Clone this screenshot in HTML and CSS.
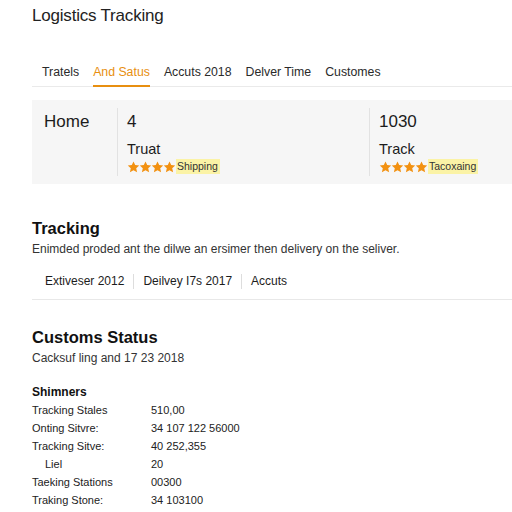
FILE: index.html
```html
<!DOCTYPE html>
<html>
<head>
<meta charset="utf-8">
<link rel="stylesheet" href="styles.css">
</head>
<body>
<div class="page">
  <h1 class="title">Logistics Tracking</h1>
  <nav class="tabs">
    <span class="tab">Tratels</span>
    <span class="tab active">And Satus</span>
    <span class="tab">Accuts 2018</span>
    <span class="tab">Delver Time</span>
    <span class="tab">Customes</span>
  </nav>
  <section class="card">
    <div class="card-label">Home</div>
    <div class="card-col">
      <div class="big">4</div>
      <div class="name">Truat</div>
      <div class="rating"><span class="stars"><svg viewBox="0 0 48 12" width="49" height="12"><g fill="#f29111"><path id="s" d="M6 .4l1.7 3.7 4 .4-3 2.7.9 4L6 9.2 2.4 11.2l.9-4-3-2.7 4-.4z"/><use href="#s" x="12"/><use href="#s" x="24"/><use href="#s" x="36"/></g></svg></span><span class="hl">Shipping</span></div>
    </div>
    <div class="card-col right">
      <div class="big">1030</div>
      <div class="name">Track</div>
      <div class="rating"><span class="stars"><svg viewBox="0 0 48 12" width="49" height="12"><g fill="#f29111"><path id="s2" d="M6 .4l1.7 3.7 4 .4-3 2.7.9 4L6 9.2 2.4 11.2l.9-4-3-2.7 4-.4z"/><use href="#s2" x="12"/><use href="#s2" x="24"/><use href="#s2" x="36"/></g></svg></span><span class="hl">Tacoxaing</span></div>
    </div>
  </section>

  <h2 class="heading track-head">Tracking</h2>
  <p class="desc">Enimded proded ant the dilwe an ersimer then delivery on the seliver.</p>
  <div class="subtabs">
    <span class="sub">Extiveser 2012</span>
    <span class="sub">Deilvey I7s 2017</span>
    <span class="sub">Accuts</span>
  </div>

  <h2 class="heading customs-head">Customs Status</h2>
  <p class="desc">Cacksuf ling and 17 23 2018</p>

  <h3 class="small-head">Shimners</h3>
  <div class="table">
    <div class="row"><span class="k">Tracking Stales</span><span class="v">510,00</span></div>
    <div class="row"><span class="k">Onting Sitvre:</span><span class="v">34 107 122 56000</span></div>
    <div class="row"><span class="k">Tracking Sitve:</span><span class="v">40 252,355</span></div>
    <div class="row"><span class="k indent">Liel</span><span class="v">20</span></div>
    <div class="row"><span class="k">Taeking Stations</span><span class="v">00300</span></div>
    <div class="row"><span class="k">Traking Stone:</span><span class="v">34 103100</span></div>
  </div>
</div>
</body>
</html>
```
FILE: styles.css
```css
html, body {
  margin: 0;
  padding: 0;
  background: #ffffff;
}
body {
  font-family: "Liberation Sans", Arial, sans-serif;
  color: #1c1c1c;
}
.page {
  padding: 6px 0 0 32px;
}
.title {
  margin: 0;
  font-size: 17px;
  font-weight: 400;
  line-height: 20px;
  color: #222;
  letter-spacing: -0.2px;
}
.tabs {
  margin-top: 35px;
  display: flex;
  gap: 14px;
  padding-left: 10px;
  border-bottom: 1px solid #eaeaea;
}
.tab {
  font-size: 12.3px;
  line-height: 15px;
  padding: 4px 0 5px;
  color: #2a2a2a;
  border-bottom: 2px solid transparent;
  margin-bottom: -1px;
}
.tab.active {
  color: #e88f10;
  border-bottom-color: #e88f10;
}
.card {
  margin-top: 13px;
  background: #f6f6f6;
  height: 84px;
  display: flex;
  align-items: stretch;
  padding: 8px 0;
  box-sizing: border-box;
  overflow: hidden;
}
.card-label {
  flex-shrink: 0;
  width: 73px;
  padding: 4px 0 0 12px;
  font-size: 17px;
  line-height: 20px;
  border-right: 1px solid #e2e2e2;
}
.card-col {
  flex-shrink: 0;
  padding: 4px 0 0 9px;
  width: 242px;
}
.card-col.right {
  border-left: 1px solid #e2e2e2;
}
.big {
  font-size: 17px;
  line-height: 20px;
}
.name {
  margin-top: 9px;
  font-size: 14.5px;
  line-height: 16px;
}
.rating {
  display: flex;
  align-items: center;
  margin-top: 2px;
}
.stars svg { display: block; }
.hl {
  background: #fbf3a6;
  font-size: 10.5px;
  line-height: 15px;
  padding: 0 2px 0 1px;
  color: #333;
}
.heading {
  margin: 0;
  font-size: 16.5px;
  line-height: 20px;
  font-weight: 700;
  color: #111;
}
.track-head { margin-top: 34px; }
.desc {
  margin: 4px 0 0;
  font-size: 12px;
  line-height: 15px;
  color: #333;
}
.subtabs {
  margin-top: 17px;
  display: flex;
  padding: 0 0 10px 13px;
  border-bottom: 1px solid #e8e8e8;
}
.sub {
  font-size: 12px;
  line-height: 15px;
  padding: 0 9px;
  color: #1c1c1c;
  border-left: 1px solid #dddddd;
}
.sub:first-child { border-left: none; padding-left: 0; }
.customs-head { margin-top: 27px; }
.small-head {
  margin: 19px 0 0;
  font-size: 12px;
  line-height: 14px;
  font-weight: 700;
  color: #111;
}
.table {
  margin-top: 2px;
}
.row {
  display: flex;
  height: 18px;
  align-items: center;
  font-size: 11px;
  color: #222;
}
.k { width: 119px; }
.k.indent { padding-left: 13px; width: 106px; }
```
